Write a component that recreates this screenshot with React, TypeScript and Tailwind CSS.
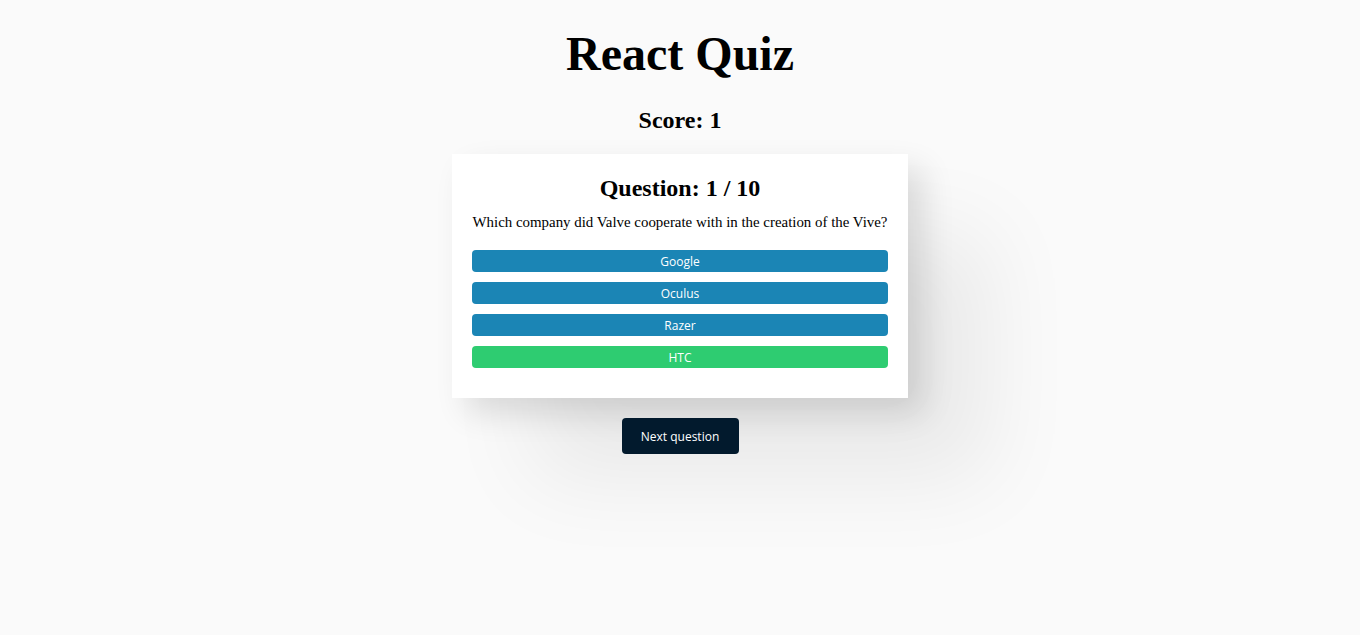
import React from "react";

const answers = [
  { text: "Google", correct: false },
  { text: "Oculus", correct: false },
  { text: "Razer", correct: false },
  { text: "HTC", correct: true },
];

export default function App() {
  return (
    <div className="min-h-[635px] bg-[#fafafa] flex flex-col items-center text-black">
      <h1 className="mt-[26px] text-[48px] leading-[56px] font-bold [font-family:'Liberation_Serif',serif]">
        React Quiz
      </h1>
      <h2 className="mt-[24px] text-[24px] leading-[28px] font-bold [font-family:'Liberation_Serif',serif]">
        Score: 1
      </h2>
      <div className="mt-[20px] w-[456px] bg-white px-[20px] pt-[20px] pb-[30px] flex flex-col items-center shadow-[15px_15px_30px_rgba(0,0,0,0.12),80px_80px_90px_rgba(0,0,0,0.07)]">
        <h3 className="text-[24px] leading-[28px] font-bold [font-family:'Liberation_Serif',serif]">
          Question: 1 / 10
        </h3>
        <p className="mt-[11px] whitespace-nowrap text-[14.9px] leading-[18px] [font-family:'Liberation_Serif',serif]">
          Which company did Valve cooperate with in the creation of the Vive?
        </p>
        <div className="mt-[19px] w-full flex flex-col gap-[10px]">
          {answers.map((a) => (
            <button
              key={a.text}
              className={`w-full h-[22px] pt-[2px] rounded-[4px] text-white text-[12px] leading-[18px] [font-family:'Open_Sans',sans-serif] ${
                a.correct ? "bg-[#2ecc71]" : "bg-[#1b85b5]"
              }`}
            >
              {a.text}
            </button>
          ))}
        </div>
      </div>
      <button className="mt-[20px] w-[117px] h-[36px] pt-[1px] rounded-[4px] bg-[#021a2d] text-white text-[12px] [font-family:'Open_Sans',sans-serif]">
        Next question
      </button>
    </div>
  );
}
